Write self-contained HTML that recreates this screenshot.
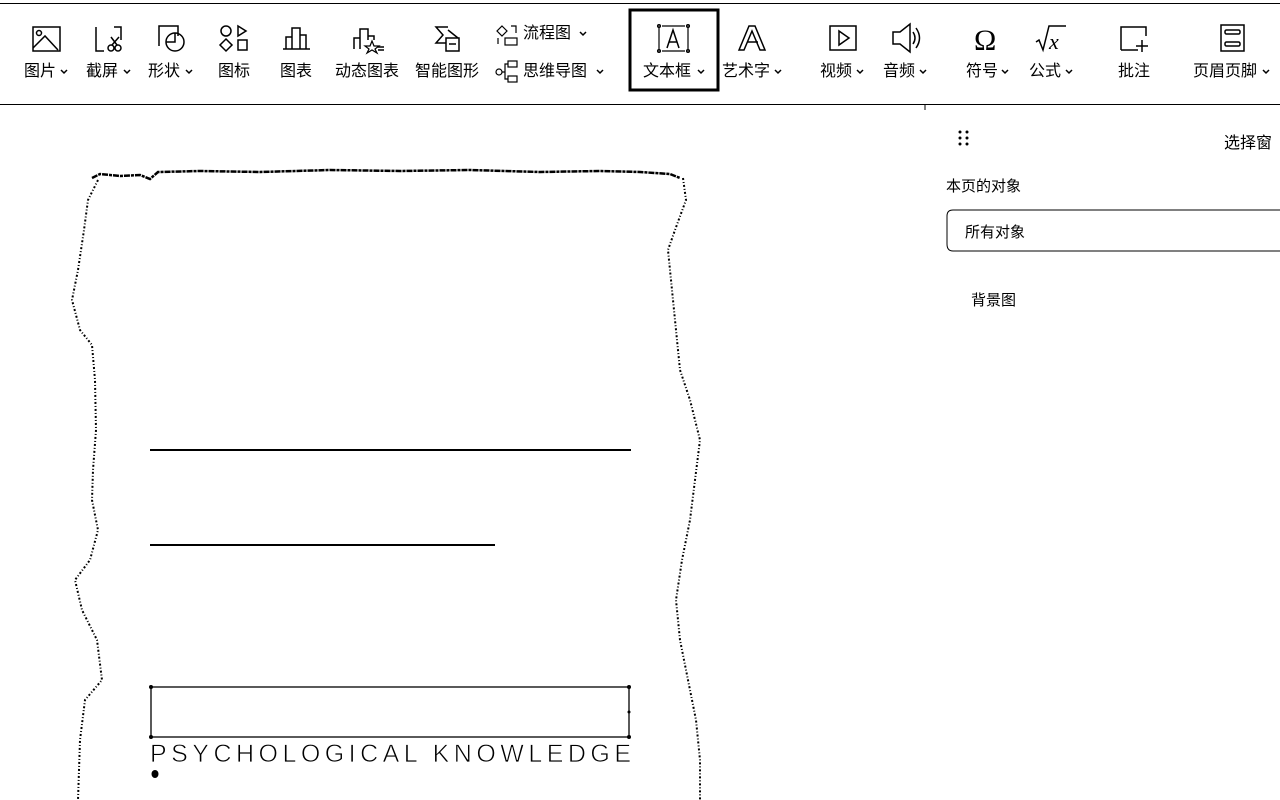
<!DOCTYPE html>
<html><head><meta charset="utf-8"><style>
*{margin:0;padding:0;box-sizing:border-box}
body{width:1280px;height:800px;overflow:hidden;background:#fff;position:relative;font-family:"Liberation Sans","Noto Sans CJK SC",sans-serif;color:#000}
.l{position:absolute;font-size:16px;line-height:16px;white-space:nowrap}
.a{position:absolute;font-size:15px;white-space:nowrap}
svg{position:absolute;left:0;top:0}
</style></head><body>
<svg width="1280" height="800" fill="none" stroke="#000" stroke-width="1.5">
<line x1="0" y1="3.5" x2="1280" y2="3.5" stroke-width="1"/>
<line x1="0" y1="104.5" x2="1280" y2="104.5" stroke-width="1"/>
<line x1="925" y1="104" x2="925" y2="110" stroke-width="1"/>
<rect x="630" y="10" width="88" height="80" stroke-width="3"/>
<rect x="33" y="27" width="27" height="24"/><circle cx="39" cy="33" r="2.5"/><path d="M33 48 L45 36 L58 50"/>
<path d="M96 27 V51 H104 M114 27 H121 V40" /><circle cx="111" cy="48" r="3"/><circle cx="118" cy="48" r="3"/><path d="M111 37 L117 45 M119 37 L112 45"/>
<path d="M159 46 V26 H178 V36"/><circle cx="175" cy="42" r="9"/><path d="M166 42 H175 V33"/>
<circle cx="226" cy="31" r="5"/><path d="M238 26 L246 31 L238 36 Z"/><path d="M226 39 L232 45 L226 51 L220 45 Z"/><rect x="238" y="40" width="9" height="10"/>
<path d="M283 49 H310 M286 49 V37 H292 M292 49 V28 H300 V49 M300 49 V35 H306 V49"/>
<path d="M354 49 V38 H360 M360 49 V29 H368 V40 M368 36 H374 V40"/><path d="M372 41 L374 46 L379 46 L375 49 L377 53 L372 50 L367 53 L369 49 L365 46 L370 46 Z" stroke-width="1.2"/><path d="M378 47 H384 M378 50 H384"/>
<path d="M448 27 H436 L443 35 L436 43 H446"/><path d="M448 30 L458 38"/><rect x="446" y="38" width="13" height="13"/><path d="M449 44 H456"/>
<path d="M502 26 L507 31 L502 36 L497 31 Z" stroke-width="1.2"/><path d="M511 26 H516 V33 M498 38 V44" stroke-width="1.2"/><rect x="505" y="38" width="12" height="7" stroke-width="1.2"/>
<rect x="508" y="61" width="9" height="6" stroke-width="1.2"/><rect x="508" y="76" width="9" height="6" stroke-width="1.2"/><circle cx="499" cy="72" r="3" stroke-width="1.2"/><path d="M502 72 H505 V64 H508 M505 72 V79 H508" stroke-width="1.2"/>
<path d="M659 27 V50 M688 27 V50 M662 26 H685 M662 51 H685" stroke-width="1.2"/><circle cx="659" cy="26" r="1.3"/><circle cx="688" cy="26" r="1.3"/><circle cx="659" cy="51" r="1.3"/><circle cx="688" cy="51" r="1.3"/>
<path d="M667 48 L673 30 L679 48 M669 42 H677"/>
<path d="M739 50 L749 26 H755 L765 50 H760 L752 31 L744 50 Z M747 42 H758"/>
<rect x="830" y="26" width="26" height="24"/><path d="M839 31 L849 38 L839 45 Z"/>
<path d="M893 32 H900 L910 24 V52 L900 44 H893 Z M913 32 Q917 38 913 44 M916 28 Q923 38 916 48"/>
<text x="974" y="50" font-family="Liberation Serif" font-size="30" fill="#000" stroke="none">Ω</text>
<path d="M1036 42 L1039 40 L1043 50 L1049 26 H1066"/><text x="1049" y="49" font-family="Liberation Serif" font-style="italic" font-size="22" fill="#000" stroke="none">x</text>
<path d="M1121 50 V27 H1146 V36 M1121 50 H1138 M1142 40 V52 M1136 46 H1148"/>
<rect x="1221" y="25" width="23" height="26"/><rect x="1225" y="30" width="15" height="4" rx="1.5"/><rect x="1225" y="42" width="15" height="4" rx="1.5"/>
<g stroke-width="1.5">
<path d="M61 70 l3 3 l3-3"/><path d="M124 70 l3 3 l3-3"/><path d="M186 70 l3 3 l3-3"/><path d="M580 32 l3 3 l3-3"/><path d="M597 70 l3 3 l3-3"/><path d="M698 70 l3 3 l3-3"/><path d="M775 70 l3 3 l3-3"/><path d="M857 70 l3 3 l3-3"/><path d="M920 70 l3 3 l3-3"/><path d="M1002 70 l3 3 l3-3"/><path d="M1066 70 l3 3 l3-3"/><path d="M1263 70 l3 3 l3-3"/>
</g>
<g fill="#000" stroke="none"><circle cx="960" cy="132" r="1.5"/><circle cx="967" cy="132" r="1.5"/><circle cx="960" cy="138" r="1.5"/><circle cx="967" cy="138" r="1.5"/><circle cx="960" cy="144" r="1.5"/><circle cx="967" cy="144" r="1.5"/></g>
<path d="M1280 210 H953 Q947 210 947 216 V244 Q947 251 953 251 H1280" stroke-width="1"/>
<path d="M92 178 L100 174 L120 176 L140 175 L150 179 L158 172 L200 171 L260 172 L330 170 L400 171 L470 170 L540 172 L600 171 L640 172 L670 174 L680 178" stroke-width="2.5" stroke-dasharray="6 1 3 1"/>
<path d="M98 180 L88 200 L84 230 L78 270 L72 300 L80 330 L92 345 L95 380 L96 430 L93 470 L92 500 L98 530 L90 560 L75 580 L82 610 L97 640 L102 680 L85 700 L80 740 L78 800" stroke-width="2" stroke-dasharray="2 2 1 2"/>
<path d="M683 178 L686 200 L675 230 L668 250 L672 290 L676 330 L680 370 L690 400 L700 440 L695 480 L690 520 L682 560 L676 600 L680 640 L688 680 L696 720 L700 760 L700 800" stroke-width="2" stroke-dasharray="2 2 1 2"/>
<line x1="150" y1="450" x2="631" y2="450" stroke-width="2"/>
<line x1="150" y1="545" x2="495" y2="545" stroke-width="2"/>
<rect x="151" y="687" width="478" height="50" stroke-width="1.3"/>
<g fill="#000" stroke="none"><circle cx="151" cy="687" r="2"/><circle cx="629" cy="687" r="2"/><circle cx="151" cy="737" r="2"/><circle cx="629" cy="737" r="2"/><circle cx="629" cy="712" r="1.5"/><ellipse cx="155" cy="774" rx="3.5" ry="4"/></g>
<text x="150" y="762" font-family="Liberation Sans" font-size="25" fill="#000" stroke="#fff" stroke-width="0.7" paint-order="normal" textLength="481" lengthAdjust="spacing">PSYCHOLOGICAL KNOWLEDGE</text>
</svg>
<div class="l" style="left:24px;top:64px">图片</div>
<div class="l" style="left:86px;top:64px">截屏</div>
<div class="l" style="left:148px;top:64px">形状</div>
<div class="l" style="left:218px;top:64px">图标</div>
<div class="l" style="left:280px;top:64px">图表</div>
<div class="l" style="left:335px;top:64px">动态图表</div>
<div class="l" style="left:415px;top:64px">智能图形</div>
<div class="l" style="left:523px;top:26px">流程图</div>
<div class="l" style="left:523px;top:64px">思维导图</div>
<div class="l" style="left:643px;top:64px">文本框</div>
<div class="l" style="left:722px;top:64px">艺术字</div>
<div class="l" style="left:820px;top:64px">视频</div>
<div class="l" style="left:883px;top:64px">音频</div>
<div class="l" style="left:966px;top:64px">符号</div>
<div class="l" style="left:1029px;top:64px">公式</div>
<div class="l" style="left:1118px;top:64px">批注</div>
<div class="l" style="left:1193px;top:64px">页眉页脚</div>
<div class="a" style="left:1224px;top:129px;font-size:16px">选择窗</div>
<div class="a" style="left:946px;top:175px">本页的对象</div>
<div class="a" style="left:965px;top:221px">所有对象</div>
<div class="a" style="left:971px;top:289px">背景图</div>
</body></html>
